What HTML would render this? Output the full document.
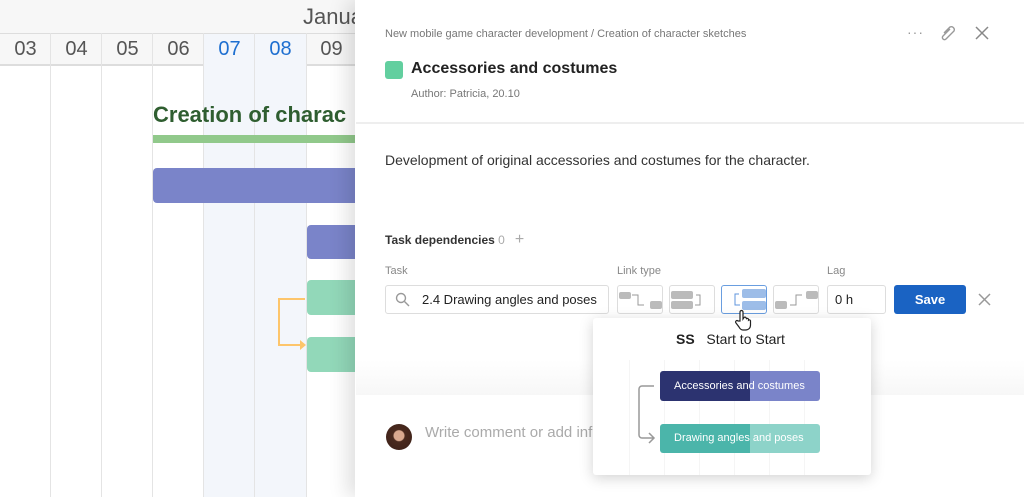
<!DOCTYPE html>
<html><head><meta charset="utf-8"><style>
*{margin:0;padding:0;box-sizing:border-box}
body{width:1024px;height:497px;overflow:hidden;position:relative;background:#fff;font-family:"Liberation Sans",sans-serif}
.a{position:absolute}
.col{position:absolute;top:33px;bottom:0;border-left:1.5px solid #e4e4e4}
.day{position:absolute;top:33px;height:33px;width:51px;text-align:center;font-size:20px;line-height:33px;color:#555}
.lbl{position:absolute;font-size:11px;color:#888}
.btn{position:absolute;top:285px;width:46px;height:29px;border:1px solid #ddd;border-radius:3px;background:#fff}
</style></head><body>
<div class="a" style="left:0;top:0;width:360px;height:66px;background:#f7f7f7;border-bottom:2px solid #ddd"></div>
<div class="a" style="left:0;top:33px;width:360px;height:1px;background:#ddd"></div>
<div class="a" style="left:303px;top:4px;font-size:22px;color:#555">Janua</div>
<div class="a" style="left:203px;top:34px;width:103px;bottom:0;background:#f3f6fb"></div>
<div class="col" style="left:50px"></div><div class="col" style="left:101px"></div><div class="col" style="left:152px"></div><div class="col" style="left:203px"></div><div class="col" style="left:254px"></div><div class="col" style="left:306px"></div>
<div class="day" style="left:0">03</div><div class="day" style="left:51px">04</div><div class="day" style="left:102px">05</div><div class="day" style="left:153px">06</div><div class="day" style="left:204px;color:#1e6fd0">07</div><div class="day" style="left:255px;color:#1e6fd0">08</div><div class="day" style="left:306px">09</div>
<div class="a" style="left:153px;top:102px;font-size:22px;font-weight:bold;color:#2f5e30;white-space:nowrap">Creation of charac</div>
<div class="a" style="left:153px;top:135px;width:210px;height:8px;background:#91c98b"></div>
<div class="a" style="left:153px;top:168px;width:210px;height:35px;background:#7a84c9;border-radius:4px"></div>
<div class="a" style="left:307px;top:225px;width:60px;height:34px;background:#7a84c9;border-radius:4px"></div>
<div class="a" style="left:307px;top:280px;width:60px;height:35px;background:#92d8b9;border-radius:4px"></div>
<div class="a" style="left:307px;top:337px;width:60px;height:35px;background:#92d8b9;border-radius:4px"></div>
<svg class="a" style="left:270px;top:290px" width="40" height="70"><path d="M35 9H9V55H32" fill="none" stroke="#fdc56b" stroke-width="2"/><path d="M30 50L36 55L30 60Z" fill="#fdc56b"/></svg>
<div class="a" style="left:355px;top:0;right:0;bottom:0;background:#fff;box-shadow:-8px 0 18px rgba(0,0,0,.12)"></div>
<div class="a" style="left:356px;top:360px;right:0;height:35px;background:linear-gradient(#fff,#f7f7f7)"></div>
<div class="a" style="left:385px;top:28px;font-size:11px;color:#777">New mobile game character development / Creation of character sketches</div>
<div class="a" style="left:907px;top:24px;font-size:14px;color:#999;letter-spacing:1px">···</div>
<svg class="a" style="left:939px;top:24px" width="20" height="20"><path d="M5 9l6-6a3 3 0 0 1 4 4l-8 8a2 2 0 0 1-3-3l7-7" fill="none" stroke="#999" stroke-width="1.4"/></svg>
<svg class="a" style="left:975px;top:26px" width="14" height="14"><path d="M1 1L13 13M13 1L1 13" stroke="#888" stroke-width="1.5"/></svg>
<div class="a" style="left:385px;top:61px;width:18px;height:18px;background:#62cf9f;border-radius:3px"></div>
<div class="a" style="left:411px;top:60px;font-size:16px;font-weight:bold;color:#222">Accessories and costumes</div>
<div class="a" style="left:411px;top:88px;font-size:11px;color:#777">Author: Patricia, 20.10</div>
<div class="a" style="left:356px;top:122px;right:0;height:2px;background:#eee"></div>
<div class="a" style="left:385px;top:152px;font-size:14px;color:#333">Development of original accessories and costumes for the character.</div>
<div class="a" style="left:385px;top:231px;font-size:12px;font-weight:bold;color:#333">Task dependencies <span style="font-weight:normal;color:#aaa">0 &nbsp; <span style="font-size:16px">+</span></span></div>
<div class="lbl" style="left:385px;top:265px">Task</div><div class="lbl" style="left:617px;top:265px">Link type</div><div class="lbl" style="left:827px;top:265px">Lag</div>
<div class="a" style="left:385px;top:285px;width:224px;height:29px;border:1px solid #ddd;border-radius:3px"></div>
<svg class="a" style="left:395px;top:292px" width="16" height="16"><circle cx="6" cy="6" r="4.5" fill="none" stroke="#999" stroke-width="1.4"/><path d="M9.5 9.5L14 14" stroke="#999" stroke-width="1.4"/></svg>
<div class="a" style="left:422px;top:292px;font-size:13px;color:#222">2.4 Drawing angles and poses</div>
<div class="btn" style="left:617px"><svg width="46" height="29"><rect x="1" y="6" width="12" height="7" rx="2" fill="#bbb"/><path d="M14 9h6v10h6" fill="none" stroke="#999"/><rect x="32" y="15" width="12" height="8" rx="2" fill="#bbb"/></svg></div>
<div class="btn" style="left:669px"><svg width="46" height="29"><rect x="1" y="5" width="22" height="8" rx="2" fill="#bbb"/><rect x="1" y="15" width="22" height="8" rx="2" fill="#bbb"/><path d="M26 9h4v10h-5" fill="none" stroke="#999"/></svg></div>
<div class="btn" style="left:721px;border-color:#6a9ee0"><svg width="46" height="29"><rect x="20" y="3" width="24" height="9" rx="2" fill="#9dbde8"/><rect x="20" y="15" width="24" height="9" rx="2" fill="#9dbde8"/><path d="M17 8h-4v11h5" fill="none" stroke="#5f95de"/></svg></div>
<div class="btn" style="left:773px"><svg width="46" height="29"><rect x="1" y="15" width="12" height="8" rx="2" fill="#bbb"/><path d="M16 19h6v-10h6" fill="none" stroke="#999"/><rect x="32" y="5" width="12" height="8" rx="2" fill="#bbb"/></svg></div>
<div class="a" style="left:827px;top:285px;width:59px;height:29px;border:1px solid #ddd;border-radius:3px;font-size:13px;line-height:27px;padding-left:7px;color:#222">0 h</div>
<div class="a" style="left:894px;top:285px;width:72px;height:29px;background:#1a63c3;border-radius:3px;color:#fff;font-size:13px;font-weight:bold;text-align:center;line-height:29px">Save</div>
<svg class="a" style="left:978px;top:293px" width="13" height="13"><path d="M1 1L12 12M12 1L1 12" stroke="#999" stroke-width="1.5"/></svg>
<div class="a" style="left:386px;top:424px;width:26px;height:26px;border-radius:50%;background:radial-gradient(circle at 50% 45%,#d9a98f 0 5px,#4a2a1e 6px,#3a1f18)"></div>
<div class="a" style="left:425px;top:424px;font-size:15px;color:#aaa">Write comment or add inf</div>
<div class="a" style="left:593px;top:318px;width:278px;height:157px;background:#fff;border-radius:3px;box-shadow:0 3px 14px rgba(0,0,0,.18)"></div>
<div class="a" style="left:629px;top:360px;width:210px;height:115px;background:repeating-linear-gradient(90deg,#f5f5f5 0 1px,transparent 1px 35px)"></div>
<div class="a" style="left:676px;top:331px;font-size:14px;color:#222"><b>SS</b> &nbsp; Start to Start</div>
<div class="a" style="left:660px;top:371px;width:160px;height:30px;border-radius:3px;background:linear-gradient(90deg,#2c3370 0 90px,#7a84c9 90px);color:#fff;font-size:11px;line-height:30px;padding-left:14px">Accessories and costumes</div>
<div class="a" style="left:660px;top:424px;width:160px;height:29px;border-radius:3px;background:linear-gradient(90deg,#4bb5aa 0 90px,#8dd3c9 90px);color:#fff;font-size:11px;line-height:29px;padding-left:14px">Drawing angles and poses</div>
<svg class="a" style="left:625px;top:380px" width="40" height="70"><path d="M29 6H17a3 3 0 0 0-3 3V55a3 3 0 0 0 3 3H29M24 53l5 5-5 5" fill="none" stroke="#999" stroke-width="1.5"/></svg>
<svg class="a" style="left:734px;top:309px" width="18" height="22"><path d="M6 12V3a1.5 1.5 0 0 1 3 0v7l1-1.5a1.3 1.3 0 0 1 2 .2l.5 1a1.3 1.3 0 0 1 2 .5v1a1.3 1.3 0 0 1 2 .5V16c0 3-2 5-5 5H9c-2 0-3-1-4-3L2 14a1.4 1.4 0 0 1 2-2z" fill="#fff" stroke="#222" stroke-width="1.2"/></svg>
</body></html>
